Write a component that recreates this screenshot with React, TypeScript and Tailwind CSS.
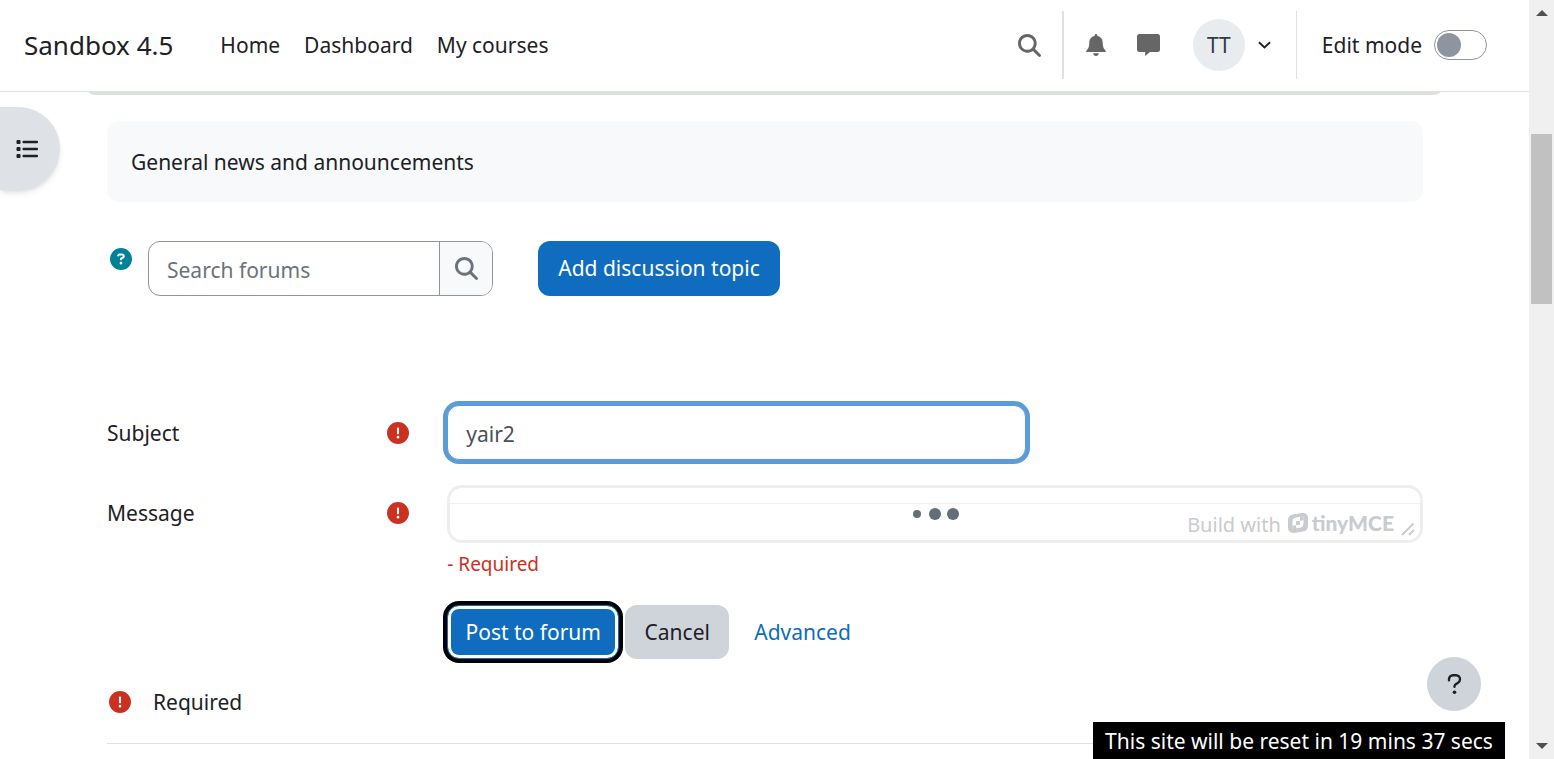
import type { ReactNode } from "react";
import { FaCircleExclamation, FaCircleQuestion, FaMagnifyingGlass } from "react-icons/fa6";

function BellIcon() {
  return (
    <svg viewBox="0 0 20 22" className="h-[22px] w-5" fill="currentColor">
      <path d="M10 0c.8 0 1.400.6 1.400 1.400v.7c3.200.6 5.300 3.300 5.300 6.600 0 3.200.7 5.300 1.900 6.900.6.8 1.200 1.300 1.200 1.900v.4H.2v-.4c0-.6.6-1.100 1.200-1.900 1.200-1.600 1.900-3.700 1.900-6.900 0-3.300 2.100-6 5.300-6.600v-.7C8.600.6 9.200 0 10 0ZM7.200 19.300h5.600C12.800 20.800 11.500 22 10 22s-2.800-1.200-2.800-2.700Z" />
    </svg>
  );
}

function MessageIcon() {
  return (
    <svg viewBox="0 0 23 22" className="h-[22px] w-[23px]" fill="currentColor">
      <path d="M2.500 0h18A2.500 2.500 0 0 1 23 2.500v13a2.500 2.500 0 0 1-2.500 2.500H13l-4.800 4V18H2.500A2.500 2.500 0 0 1 0 15.500v-13A2.500 2.500 0 0 1 2.500 0Z" />
    </svg>
  );
}

function ListIcon() {
  return (
    <svg viewBox="0 0 22 18" className="h-[18px] w-[22px]" fill="currentColor">
      <rect x="0.500" y="0" width="4" height="4" rx="1" />
      <rect x="0.500" y="7" width="4" height="4" rx="1" />
      <rect x="0.500" y="14" width="4" height="4" rx="1" />
      <rect x="6.500" y="0.800" width="15.500" height="2.400" rx="1" />
      <rect x="6.500" y="7.800" width="15.500" height="2.400" rx="1" />
      <rect x="6.500" y="14.800" width="15.500" height="2.400" rx="1" />
    </svg>
  );
}

function Header() {
  return (
    <header className="relative z-10 flex h-[92px] shrink-0 items-center border-b border-[#dee2e6] bg-white pr-[42px] pb-px pl-6">
      <a href="#site" className="mr-[47px] text-[26px] whitespace-nowrap">
        Sandbox 4.5
      </a>
      <nav className="flex gap-6 whitespace-nowrap">
        <a href="#home">Home</a>
        <a href="#dashboard">Dashboard</a>
        <a href="#courses">My courses</a>
      </nav>
      <div className="ml-auto flex h-[68px] items-center whitespace-nowrap">
        <button type="button" aria-label="Toggle search input" className="text-[#666666]">
          <FaMagnifyingGlass className="size-[23px]" />
        </button>
        <div className="ml-[21px] h-full w-0.5 bg-[#dee2e6]" />
        <button type="button" aria-label="Notifications" className="ml-[22px] text-[#666666]">
          <BellIcon />
        </button>
        <button type="button" aria-label="Messages" className="ml-[31px] text-[#666666]">
          <MessageIcon />
        </button>
        <button type="button" aria-label="User menu" className="ml-[33px] flex items-center gap-[13px]">
          <span className="flex size-[52px] items-center justify-center rounded-full bg-[#e9ecef] text-[#343a40]">
            TT
          </span>
          <svg viewBox="0 0 14 10" className="h-[10px] w-[13px]" fill="none" stroke="currentColor" strokeWidth="2">
            <path d="M1 2l6 5.600L13 2" />
          </svg>
        </button>
        <div className="ml-[25px] h-full w-px bg-[#dee2e6]" />
        <label htmlFor="edit-mode" className="ml-[25px]">
          Edit mode
        </label>
        <input
          id="edit-mode"
          type="checkbox"
          role="switch"
          className="ml-3 flex h-[30px] w-[53px] appearance-none items-center rounded-full border border-[#8f959e] bg-white pl-0.5 before:size-6 before:rounded-full before:bg-[#8f959e]"
        />
      </div>
    </header>
  );
}

function RequiredIcon() {
  return <FaCircleExclamation aria-label="Required" className="size-[22px] shrink-0 text-[#ca3120]" />;
}

function FieldLabel({ htmlFor, children }: { htmlFor: string; children: ReactNode }) {
  return (
    <div className="flex h-[55px] items-center justify-between pr-[23px]">
      <label htmlFor={htmlFor}>{children}</label>
      <RequiredIcon />
    </div>
  );
}

function MessageEditor() {
  return (
    <div className="relative h-[58px] rounded-[15px] border-[3px] border-[#eeeeee] pt-[15px]">
      <textarea
        id="message"
        className="block h-[37px] w-full resize-none rounded-b-xl border-t border-[#f0f0f0] outline-none"
      />
      <svg viewBox="0 0 48 12" className="absolute top-5 left-[calc(50%-24px)] h-3 w-12" fill="#656d78">
        <circle cx="6" cy="6" r="4" />
        <circle cx="24" cy="6" r="6" />
        <circle cx="42" cy="6" r="6" />
      </svg>
      <div className="absolute right-[5px] bottom-0 flex h-[34px] items-center text-[#c8cbcf]">
        <span className="pt-1 text-[20px]">Build with</span>
        <svg viewBox="0 0 20 20" className="ml-[7px] size-5" fill="currentColor" fillRule="evenodd">
          <path d="M6 1.200 14 .1C17.400-.3 20 1.800 20 5.200V13c0 3-2 5.100-5 5.600L6 19.900C2.600 20.300 0 18.200 0 14.800V7c0-3 2-5.200 6-5.800ZM7.800 4.600c-2 .3-3.300 1.600-3.300 3.600v7.600l7.700-1.100c2-.3 3.300-1.600 3.300-3.600V3.500L7.800 4.600Z" />
          <path d="M8 8.300l4-.6v4l-4 .6v-4ZM12 3.800l3.500-.5v4L12 7.700V3.800ZM4.500 12.700l3.500-.5v4l-3.500.5v-4Z" />
        </svg>
        <span className="ml-1 font-['Lato',sans-serif] text-[21px] font-black">tinyMCE</span>
        <svg viewBox="0 0 14 14" className="mt-3 ml-[7px] size-3.5" fill="none" stroke="currentColor" strokeWidth="1.800">
          <path d="M1 13 12.500 1.500M8 13l5-5" />
        </svg>
      </div>
    </div>
  );
}

function DiscussionForm() {
  return (
    <form className="mt-[109px]">
      <div className="grid grid-cols-[1fr_3fr] gap-x-[15px]">
        <FieldLabel htmlFor="subject">Subject</FieldLabel>
        <div>
          <input
            id="subject"
            type="text"
            defaultValue="yair2"
            className="h-[55px] w-[579px] max-w-full rounded-xl border border-[#5b9bd8] bg-white px-[18px] pt-0.5 text-[#495057] ring-4 ring-[#5b9bd8] outline-none"
          />
        </div>
      </div>
      <div className="mt-[25px] grid grid-cols-[1fr_3fr] gap-x-[15px]">
        <FieldLabel htmlFor="message">Message</FieldLabel>
        <div>
          <MessageEditor />
          <p className="mt-[6px] text-[19px] leading-[30px] text-[#ca3120]">- Required</p>
        </div>
      </div>
      <div className="mt-[26px] grid grid-cols-[1fr_3fr] gap-x-[15px]">
        <div className="col-start-2 flex h-[54px] items-stretch whitespace-nowrap">
          <button
            type="button"
            className="w-[172px] rounded-xl border border-[#0f6cbf] bg-[#0f6cbf] text-white ring-4 ring-black inset-ring-3 inset-ring-white"
          >
            Post to forum
          </button>
          <button type="button" className="ml-[6px] w-[104px] rounded-xl bg-[#ced4da]">
            Cancel
          </button>
          <a href="#advanced" className="ml-[25px] flex items-center text-[#0f6cbf]">
            Advanced
          </a>
        </div>
      </div>
      <div className="mt-[25px] flex h-9 items-center gap-[22px] pl-0.5">
        <RequiredIcon />
        <span>Required</span>
      </div>
    </form>
  );
}

function Scrollbar() {
  return (
    <div aria-hidden="true" className="flex w-[25px] shrink-0 flex-col items-center bg-[#f0f0f0]">
      <svg viewBox="0 0 12 6" className="mt-2.5 h-1.5 w-3" fill="#505050">
        <path d="M0 6 6 0l6 6Z" />
      </svg>
      <div className="mt-[118px] h-[170px] w-[21px] bg-[#c1c1c1]" />
      <svg viewBox="0 0 12 6" className="mt-auto mb-2.5 h-1.5 w-3" fill="#505050">
        <path d="M0 0h12L6 6Z" />
      </svg>
    </div>
  );
}

export default function App() {
  return (
    <div className="flex h-screen overflow-hidden bg-white font-['Noto_Sans',sans-serif] text-[21px] leading-[34px] text-[#1d2125]">
      <div className="relative flex min-w-0 flex-1 flex-col overflow-hidden">
        <Header />
        <main className="px-[84px]">
          <div className="-mt-[47px] h-[50px] rounded-xl bg-[#d8e4d9]" />
          <div className="pt-[26px] pr-[22px] pl-[23px]">
            <div className="rounded-xl bg-[#f8f9fa] px-6 pt-6 pb-[23px]">General news and announcements</div>
            <div className="mt-[39px] flex items-start">
              <button type="button" aria-label="Help with search" className="mt-[7px] ml-[3px] text-[#008196]">
                <FaCircleQuestion className="size-[22px]" />
              </button>
              <form className="ml-4 flex h-[55px] w-[345px] overflow-hidden rounded-xl border border-[#8f959e]">
                <input
                  type="text"
                  aria-label="Search forums"
                  placeholder="Search forums"
                  className="min-w-0 flex-1 px-[18px] pt-0.5 outline-none placeholder:text-[#6a737b]"
                />
                <button
                  type="button"
                  aria-label="Search"
                  className="flex w-[53px] items-center justify-center border-l border-[#8f959e] bg-[#f8f9fa] text-[#6a737b]"
                >
                  <FaMagnifyingGlass className="size-[23px]" />
                </button>
              </form>
              <button
                type="button"
                className="ml-[45px] h-[55px] w-[242px] rounded-xl bg-[#0f6cbf] pb-px whitespace-nowrap text-white"
              >
                Add discussion topic
              </button>
            </div>
            <DiscussionForm />
            <hr className="mt-[23px] border-[#dee2e6]" />
          </div>
        </main>
        <button
          type="button"
          aria-label="Open course index"
          className="absolute top-[107px] left-0 flex h-[83px] w-[60px] items-center rounded-r-full bg-[#dee2e6] pl-4 shadow-md"
        >
          <ListIcon />
        </button>
        <button
          type="button"
          aria-label="Show footer"
          className="absolute right-12 bottom-12 flex size-[54px] items-center justify-center rounded-full bg-[#ced4da]"
        >
          <svg viewBox="0 0 16 24" className="h-[22px] w-[15px]" fill="none" stroke="currentColor" strokeWidth="2.600" strokeLinecap="round">
            <path d="M2 8V6.800A4.300 4.300 0 0 1 6.300 2.500h3.400a4.300 4.300 0 0 1 4.300 4.300c0 1.800-.9 3.100-2.400 4L9.700 11.900C8.600 12.600 8 13.300 8 14.500V15" />
            <circle cx="8" cy="21" r="2" fill="currentColor" stroke="none" />
          </svg>
        </button>
        <div className="absolute right-6 bottom-0 flex h-[37px] w-[412px] items-center justify-center bg-black whitespace-nowrap text-white">
          This site will be reset in 19 mins 37 secs
        </div>
      </div>
      <Scrollbar />
    </div>
  );
}
